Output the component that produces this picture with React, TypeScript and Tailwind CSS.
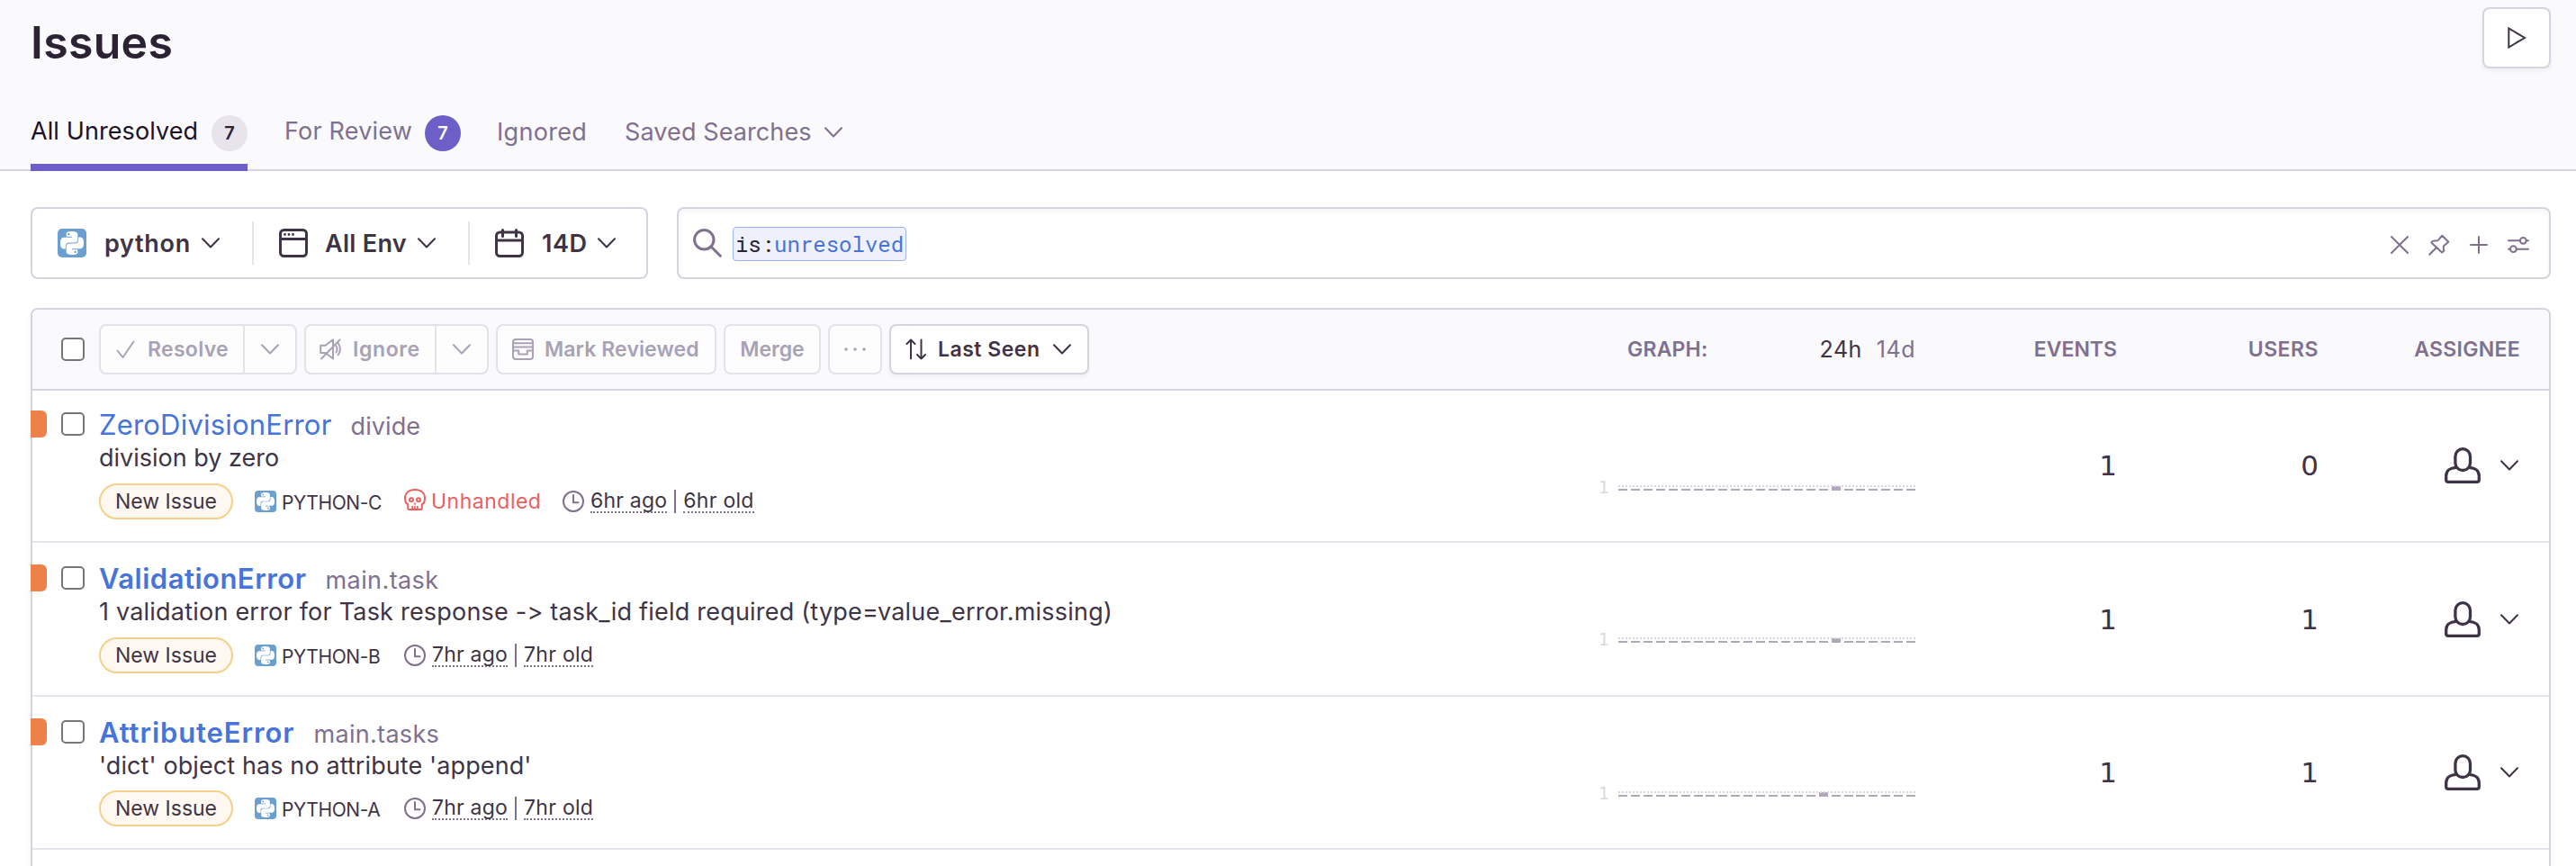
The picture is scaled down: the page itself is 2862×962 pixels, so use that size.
import type { ReactNode } from "react";
import { SiPython } from "react-icons/si";
import clsx from "clsx";

/* ---------- icons ---------- */

function Chevron({ className = "" }: { className?: string }) {
  return (
    <svg className={clsx("h-3 w-5 shrink-0", className)} viewBox="0 0 20 12" fill="none" stroke="currentColor" strokeWidth="2" strokeLinecap="round" strokeLinejoin="round">
      <path d="M1 1.2l9 9.3 9-9.3" />
    </svg>
  );
}

function Icon({ size = 24, stroke = 2, className = "", children }: { size?: number; stroke?: number; className?: string; children: ReactNode }) {
  return (
    <svg
      width={size}
      height={size}
      viewBox={`0 0 ${size} ${size}`}
      className={clsx("shrink-0", className)}
      fill="none"
      stroke="currentColor"
      strokeWidth={stroke}
      strokeLinecap="round"
      strokeLinejoin="round"
    >
      {children}
    </svg>
  );
}

function PythonBadge({ large = false }: { large?: boolean }) {
  return (
    <span className={clsx("flex shrink-0 items-center justify-center bg-[#6a9fd0] text-white", large ? "size-8 rounded-[5px]" : "size-6 rounded-[4px]")}>
      <SiPython className={large ? "size-[26px]" : "size-5"} />
    </span>
  );
}

function Skull() {
  return (
    <Icon className="mb-1">
      <path d="M4.2 17.2C1.7 16.3 1 14 1 10.5C1 4.5 5.5 1 12 1s11 3.5 11 9.5c0 3.5-.7 5.8-3.2 6.7v4.6a1.2 1.2 0 0 1-1.2 1.2H5.4a1.2 1.2 0 0 1-1.2-1.2z" />
      <circle cx="8" cy="12.3" r="2" />
      <circle cx="16" cy="12.3" r="2" />
      <path d="M12 16v1M9.2 19.5v3M12 19.5v3M14.8 19.5v3" strokeWidth="1.7" />
    </Icon>
  );
}

function Clock() {
  return (
    <Icon>
      <circle cx="12" cy="12" r="11" />
      <path d="M12 5v8.2h5.5" />
    </Icon>
  );
}

function UserIcon() {
  return (
    <Icon size={40} stroke={3.3}>
      <rect x="11.9" y="1.7" width="16.6" height="23.8" rx="8.3" />
      <path d="M12.5 22.3C6 22.6 1.7 26 1.7 31.5V36a2.3 2.3 0 0 0 2.3 2.3h32a2.3 2.3 0 0 0 2.3-2.3v-4.5c0-5.5-4.3-8.900-10.8-9.2" />
    </Icon>
  );
}

/* ---------- building blocks ---------- */

function Checkbox() {
  return <span className="block size-[26px] shrink-0 rounded-[5px] border-2 border-[#767676] bg-white" />;
}

function Button({ disabled = true, className, children }: { disabled?: boolean; className: string; children: ReactNode }) {
  return (
    <button
      className={clsx(
        "flex h-14 shrink-0 items-center rounded-lg border-2 text-[23px] leading-[30px] font-semibold whitespace-nowrap",
        disabled ? "border-[#e3e1e9] bg-[#fdfdfe] text-[#a9a2b6]" : "border-[#d6d3de] bg-white text-[#3e3446] shadow-[0_3px_4px_rgba(43,34,51,0.05)]",
        className,
      )}
    >
      {children}
    </button>
  );
}

function SplitChevron() {
  return (
    <span className="ml-auto flex h-full w-[58px] items-center justify-center border-l-2 border-[#e3e1e9]">
      <Chevron />
    </span>
  );
}

function Header() {
  return (
    <header className="flex h-[190px] flex-col justify-between border-b-2 border-[#d6d3de] bg-[#faf9fc] pr-7 pl-[34px]">
      <div className="flex items-start justify-between">
        <h1 className="mt-[17px] text-[50px] leading-[60px] font-semibold tracking-[0.3px] text-[#2b2233]">Issues</h1>
        <button className="mt-2 flex h-[68px] w-[76px] items-center justify-center rounded-lg border-2 border-[#d6d3de] bg-white text-[#3e3446] shadow-[0_3px_5px_rgba(43,34,51,0.05)]">
          <Icon>
            <path d="M3.3 1.5v21L21 12z" strokeLinejoin="miter" />
          </Icon>
        </button>
      </div>
      <nav className="-mb-0.5 flex h-[82px] gap-10 text-[27px] leading-9 text-[#80708f]">
        <a className="flex w-[241px] items-center justify-between border-b-8 border-[#6c5fc7] whitespace-nowrap text-[#1d1127]">
          <span className="pt-0.5 tracking-[0.1px]">All Unresolved</span>
          <span className="mt-1.5 flex size-10 items-center justify-center rounded-full bg-[#e7e4ec] text-[20px] font-semibold text-[#2b2233]">7</span>
        </a>
        <a className="flex w-[197px] items-center justify-between border-b-8 border-transparent whitespace-nowrap">
          <span className="pt-0.5 pl-px tracking-[0.2px]">For Review</span>
          <span className="mt-1.5 flex size-10 items-center justify-center rounded-full bg-[#6c5fc7] text-[20px] font-semibold text-white">7</span>
        </a>
        <a className="flex w-[100px] items-center border-b-8 border-transparent pt-[3px] tracking-[0.3px]">Ignored</a>
        <a className="flex w-[244px] items-center justify-between border-b-8 border-transparent pt-[3px] pl-0.5 whitespace-nowrap">
          <span className="tracking-[0.1px]">Saved Searches</span>
          <Chevron className="text-[#80708f]" />
        </a>
      </nav>
    </header>
  );
}

function Filters() {
  return (
    <div className="flex gap-8">
      <div className="flex h-20 w-[686px] shrink-0 items-center rounded-lg border-2 border-[#d6d3de] text-[27px] leading-9 font-semibold text-[#3e3446]">
        <div className="flex h-12 w-[246px] items-center border-r-2 border-[#e7e4ec] pr-9 pl-7">
          <PythonBadge large />
          <span className="ml-5 pt-px tracking-[0.7px]">python</span>
          <Chevron className="ml-auto" />
        </div>
        <div className="flex h-12 w-[240px] items-center border-r-2 border-[#e7e4ec] pr-9 pl-7">
          <Icon size={32} stroke={3}>
            <rect x="1.5" y="1.5" width="29" height="29" rx="4" />
            <path d="M2 11.5h28" />
            <path d="M6.5 6.5h.01M11 6.5h.01M15.5 6.5h.01" strokeWidth="2.8" />
          </Icon>
          <span className="ml-[19px] pt-px tracking-[0.3px]">All Env</span>
          <Chevron className="ml-auto" />
        </div>
        <div className="flex h-12 flex-1 items-center pr-[34px] pl-7">
          <Icon size={32} stroke={3}>
            <rect x="1.5" y="4" width="29" height="26.5" rx="4" />
            <path d="M2 13h28M8.5 1.5v7M23.5 1.5v7" />
          </Icon>
          <span className="ml-5 pt-px tracking-[0.5px]">14D</span>
          <Chevron className="ml-auto" />
        </div>
      </div>
      <div className="flex h-20 flex-1 items-center rounded-lg border-2 border-[#d6d3de] pr-[22px] pl-4 text-[#80708f] shadow-[inset_0_4px_6px_rgba(43,34,51,0.04)]">
        <Icon size={32} stroke={3}>
          <circle cx="12.3" cy="12.3" r="10.7" />
          <path d="M20.3 20.3l10 10" />
        </Icon>
        <span className="mt-0.5 ml-3 flex h-[38px] w-[193px] items-center justify-center rounded border border-[#9db4ec] bg-[#eef1fb] font-['Roboto_Mono','DejaVu_Sans_Mono',monospace] text-[24px] leading-8 text-[#2b2233]">
          is:<span className="text-[#4674da]">unresolved</span>
        </span>
        <div className="mt-1 ml-auto flex gap-5">
          <Icon>
            <path d="M3 3l18 18M21 3L3 21" />
          </Icon>
          <Icon>
            <path d="M15.3 1.7l7 7-5 4.3q-1.300 3 .2 5.300l-2.400 2.200L3.3 9.5q1-2.300 3.500-2 2.800.3 4.200-.800zM8.7 15.3L1.2 22.8" />
          </Icon>
          <Icon>
            <path d="M12 3v18M3 12h18" />
          </Icon>
          <Icon>
            <circle cx="17.3" cy="7.3" r="3.4" />
            <circle cx="6.4" cy="16.7" r="3.4" />
            <path d="M1 7.3h12.9M20.7 7.3H23M1 16.7h2M9.8 16.7H23" />
          </Icon>
        </div>
      </div>
    </div>
  );
}

function Toolbar() {
  return (
    <div className="flex h-[90px] items-center rounded-t-md border-b-2 border-[#d6d3de] bg-[#faf9fc] pr-8 pl-8">
      <Checkbox />
      <div className="ml-4 flex gap-2">
        <Button className="w-[220px] pl-4">
          <Icon>
            <path d="M2.5 13.5l6 7.5L20.5 3.5" />
          </Icon>
          <span className="ml-3 tracking-[0.3px]">Resolve</span>
          <SplitChevron />
        </Button>
        <Button className="w-[205px] pl-[15px]">
          <Icon>
            <path d="M6.5 7.7L15 1.2v21.3L6.5 16H1.2V7.7zM22.5 1.5L2 22.5M18.5 8.3c1.3 2.3 1.3 5 0 7.2M20.8 5.5c2.8 3.7 2.8 9 0 12.7" />
          </Icon>
          <span className="ml-[13px] tracking-[0.6px]">Ignore</span>
          <SplitChevron />
        </Button>
        <Button className="w-[245px] pl-4">
          <Icon>
            <rect x="1" y="1" width="22" height="22" rx="3" />
            <path d="M1 5.3h22M1 9.5h22M1 13.5h6.2v4h9.6v-4H23" />
          </Icon>
          <span className="ml-3 tracking-[0.1px]">Mark Reviewed</span>
        </Button>
        <Button className="w-[108px] justify-center">Merge</Button>
        <Button className="w-[60px] justify-center">
          <Icon stroke={3.6}>
            <path d="M2 12h.01M12 12h.01M22 12h.01" />
          </Icon>
        </Button>
        <Button disabled={false} className="w-[222px] pr-[18px] pl-4">
          <Icon>
            <path d="M6 22.5v-21M1.5 6L6 1.5 10.5 6M17.5 1.5v21M13 18l4.5 4.5L22 18" />
          </Icon>
          <span className="ml-3 tracking-[0.5px]">Last Seen</span>
          <Chevron className="ml-auto" />
        </Button>
      </div>
      <div className="ml-auto flex items-center text-[23px] leading-[30px] font-semibold text-[#80708f]">
        <div className="flex w-[320px] items-center justify-between">
          <span className="tracking-[0.2px]">GRAPH:</span>
          <span className="flex gap-4 text-[25px] font-normal tracking-[0.5px]">
            <span className="text-[#3e3446]">24h</span>
            <span>14d</span>
          </span>
        </div>
        <span className="w-56 text-right">EVENTS</span>
        <span className="w-56 text-right tracking-[0.5px]">USERS</span>
        <span className="w-56 text-right tracking-[0.3px]">ASSIGNEE</span>
      </div>
    </div>
  );
}

const DOTS = Array.from({ length: 83 }, (_, i) => i * 4);
const HOURS = Array.from({ length: 24 }, (_, i) => i);

function Graph({ active }: { active: number }) {
  return (
    <div className="flex w-[352px] items-start justify-between self-start pt-[98px]">
      <span className="-mt-0.5 font-['DejaVu_Sans'] text-[19px] leading-[22px] text-[#dcd8e2]">1</span>
      <svg width="330" height="24" viewBox="0 0 330 24" shapeRendering="crispEdges">
        {HOURS.map((h) => (
          <rect key={h} x={h * 13.92} y={h === active ? 8 : 11} width="10" height={h === active ? 5 : 2} fill="#b0a8ba" />
        ))}
        {DOTS.map((x) => (
          <rect key={x} x={x} y="7" width="2" height="2" fill="#d9d5e0" />
        ))}
      </svg>
    </div>
  );
}

type Issue = {
  type: string;
  typeClass: string;
  culprit: string;
  culpritClass: string;
  message: string;
  messageClass: string;
  id: string;
  unhandled?: boolean;
  seen: string;
  age: string;
  users: string;
  active: number;
  rowClass: string;
  bodyClass: string;
  markerClass: string;
  checkClass: string;
  statsClass: string;
  metaClass: string;
};

const ISSUES: Issue[] = [
  {
    type: "ZeroDivisionError",
    typeClass: "tracking-[0.2px]",
    culprit: "divide",
    culpritClass: "tracking-[0.1px]",
    message: "division by zero",
    messageClass: "",
    id: "PYTHON-C",
    unhandled: true,
    seen: "6hr ago",
    age: "6hr old",
    users: "0",
    active: 17,
    rowClass: "h-[169px]",
    bodyClass: "pt-[18px]",
    markerClass: "mt-[22px]",
    checkClass: "mt-6",
    statsClass: "-mt-px",
    metaClass: "mt-2.5",
  },
  {
    type: "ValidationError",
    typeClass: "font-semibold tracking-[0.5px]",
    culprit: "main.task",
    culpritClass: "tracking-[0.4px]",
    message: "1 validation error for Task response -> task_id field required (type=value_error.missing)",
    messageClass: "tracking-[0.21px]",
    id: "PYTHON-B",
    seen: "7hr ago",
    age: "7hr old",
    users: "1",
    active: 17,
    rowClass: "h-[171px]",
    bodyClass: "pt-5",
    markerClass: "mt-6",
    checkClass: "mt-[26px]",
    statsClass: "",
    metaClass: "mt-2.5",
  },
  {
    type: "AttributeError",
    typeClass: "font-semibold tracking-[0.9px]",
    culprit: "main.tasks",
    culpritClass: "tracking-[0.3px]",
    message: "'dict' object has no attribute 'append'",
    messageClass: "tracking-[0.1px]",
    id: "PYTHON-A",
    seen: "7hr ago",
    age: "7hr old",
    users: "1",
    active: 16,
    rowClass: "h-[170px]",
    bodyClass: "pt-5",
    markerClass: "mt-6",
    checkClass: "mt-[26px]",
    statsClass: "",
    metaClass: "mt-[9px]",
  },
];

function IssueRow({ issue }: { issue: Issue }) {
  return (
    <div className={clsx("flex border-b-2 border-[#e7e5ec] pr-8", issue.rowClass)}>
      <span className={clsx("-ml-0.5 h-[30px] w-[18px] shrink-0 rounded-r-md bg-[#ee8049]", issue.markerClass)} />
      <div className={clsx("ml-4", issue.checkClass)}>
        <Checkbox />
      </div>
      <div className={clsx("ml-4 whitespace-nowrap", issue.bodyClass)}>
        <div className="flex h-[39px] items-baseline gap-[21px] leading-10">
          <a className={clsx("text-[31px] text-[#4674da]", issue.typeClass)}>{issue.type}</a>
          <span className={clsx("text-[27px] text-[#80708f]", issue.culpritClass)}>{issue.culprit}</span>
        </div>
        <div className={clsx("text-[27px] leading-9 text-[#3e3446]", issue.messageClass)}>{issue.message}</div>
        <div className={clsx("flex h-10 items-center text-[23px] leading-6 text-[#3e3446]", issue.metaClass)}>
          <span className="flex h-10 w-[149px] items-center justify-center rounded-full border-2 border-[#f5d08a] bg-[#fef8f0]">New Issue</span>
          <span className="ml-6 flex w-[166px] items-center gap-1.5">
            <PythonBadge />
            <span className="mt-[3px] text-[21px] tracking-[-0.4px]">{issue.id}</span>
          </span>
          {issue.unhandled && (
            <span className="flex w-[176px] items-center gap-1.5 text-[#e8615f]">
              <Skull />
              <span className="tracking-[0.5px]">Unhandled</span>
            </span>
          )}
          <span className="flex items-center text-[#80708f]">
            <Clock />
            <span className="ml-[7px] h-[26px] border-b-2 border-dotted border-[#80708f] tracking-[0.2px] text-[#3e3446]">{issue.seen}</span>
            <span className="mx-2 h-[26px] w-0.5 bg-[#80708f]" />
            <span className="h-[26px] border-b-2 border-dotted border-[#80708f] tracking-[0.3px] text-[#3e3446]">{issue.age}</span>
          </span>
        </div>
      </div>
      <div className="ml-auto flex items-center font-['DejaVu_Sans'] text-[31px] leading-9 text-[#3e3446]">
        <Graph active={issue.active} />
        <div className={clsx("flex items-center", issue.statsClass)}>
          <span className="w-56 text-right">1</span>
          <span className="w-56 text-right">{issue.users}</span>
          <span className="flex w-56 items-center justify-end gap-[22px] pr-0.5">
            <UserIcon />
            <Chevron />
          </span>
        </div>
      </div>
    </div>
  );
}

export default function App() {
  return (
    <div className="h-[962px] w-full overflow-hidden bg-white font-[Inter,sans-serif]">
      <Header />
      <main className="pt-10 pr-7 pl-[34px]">
        <Filters />
        <section className="mt-8 h-[700px] rounded-t-lg border-2 border-[#d6d3de] bg-white shadow-[0_2px_6px_rgba(43,34,51,0.04)]">
          <Toolbar />
          {ISSUES.map((issue) => (
            <IssueRow key={issue.id} issue={issue} />
          ))}
        </section>
      </main>
    </div>
  );
}
